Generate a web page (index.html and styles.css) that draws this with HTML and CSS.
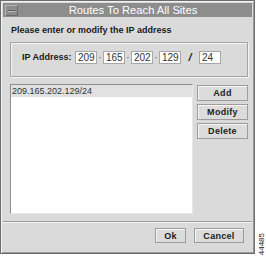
FILE: index.html
```html
<!DOCTYPE html>
<html>
<head>
<meta charset="utf-8">
<link rel="stylesheet" href="styles.css">
</head>
<body>
<div class="window">
  <div class="titlebar">
    <span class="menu-btn"><span class="menu-dash"></span></span>
    <span class="title">Routes To Reach All Sites</span>
  </div>
  <div class="content">
    <div class="prompt">Please enter or modify the IP address</div>
    <div class="ipbox">
      <span class="ip-label">IP Address:</span>
      <span class="field">209</span>
      <span class="dot">·</span>
      <span class="field">165</span>
      <span class="dot">·</span>
      <span class="field">202</span>
      <span class="dot">·</span>
      <span class="field">129</span>
      <span class="slash">/</span>
      <span class="field">24</span>
    </div>
    <div class="main">
      <div class="list">
        <div class="item selected">209.165.202.129/24</div>
      </div>
      <div class="side">
        <button class="btn side-btn">Add</button>
        <button class="btn side-btn">Modify</button>
        <button class="btn side-btn">Delete</button>
      </div>
    </div>
  </div>
  <div class="footer">
    <button class="btn ok-btn">Ok</button>
    <button class="btn cancel-btn">Cancel</button>
  </div>
</div>
<div class="figno">44485</div>
</body>
</html>
```

FILE: styles.css
```css
html, body {
  margin: 0;
  padding: 0;
  background: #ffffff;
}
body {
  width: 266px;
  height: 256px;
  display: flex;
  align-items: flex-end;
  font-family: "Liberation Sans", Arial, sans-serif;
  color: #1a1a1a;
}
.window {
  align-self: flex-start;
  width: 255px;
  height: 254px;
  box-sizing: border-box;
  border: 1px solid #6c6c6c;
  box-shadow: inset 1px 1px 0 #f2f2f2, inset -1px -1px 0 #9a9a9a;
  padding: 2px 2px 2px 2px;
  background: #dadada;
  display: flex;
  flex-direction: column;
}
.titlebar {
  height: 14px;
  background: #8d8d8d;
  display: flex;
  align-items: center;
}
.menu-btn {
  width: 11px;
  height: 9px;
  margin-left: 2px;
  border: 1px solid;
  border-color: #b4b4b4 #6a6a6a #6a6a6a #b4b4b4;
  display: flex;
  align-items: center;
  justify-content: center;
}
.menu-dash {
  width: 7px;
  height: 1px;
  background: #5a5a5a;
  box-shadow: 0 1px 0 #c0c0c0;
}
.title {
  flex: 1;
  text-align: center;
  color: #ffffff;
  font-size: 11.2px;
  line-height: 14px;
  margin-right: 4px;
}
.content {
  flex: 1;
  padding: 7px 4px 0 7px;
  display: flex;
  flex-direction: column;
}
.prompt {
  font-size: 9px;
  font-weight: bold;
  line-height: 12px;
  padding-left: 1px;
}
.ipbox {
  margin-top: 6px;
  height: 35px;
  box-sizing: border-box;
  border: 1px solid #a4a4a4;
  box-shadow: inset 1px 1px 0 #f4f4f4, 1px 1px 0 #f4f4f4;
  padding: 8px 0 0 11px;
  display: flex;
  align-items: flex-start;
}
.ip-label {
  font-size: 9px;
  font-weight: bold;
  line-height: 13px;
  width: 53px;
}
.field {
  width: 22px;
  height: 13px;
  box-sizing: border-box;
  background: #ffffff;
  border: 1px solid #a8a8a8;
  font-size: 10px;
  line-height: 11px;
  padding-left: 2px;
  color: #333;
}
.dot {
  width: 6px;
  text-align: center;
  font-size: 10px;
  line-height: 13px;
  color: #555;
}
.slash {
  width: 18px;
  text-align: center;
  font-size: 11px;
  font-weight: bold;
  font-style: italic;
  line-height: 13px;
}
.main {
  margin-top: 7px;
  display: flex;
  gap: 4px;
}
.list {
  width: 183px;
  height: 130px;
  box-sizing: border-box;
  background: #ffffff;
  border: 1px solid #8c8c8c;
  border-right-color: #e8e8e8;
  border-bottom-color: #e8e8e8;
}
.item {
  font-size: 9px;
  line-height: 12px;
  padding-left: 1px;
  color: #333;
}
.item.selected {
  background: #e1e1e1;
}
.side {
  width: 51px;
  padding-top: 1px;
  display: flex;
  flex-direction: column;
  gap: 3px;
}
.btn {
  font-family: "Liberation Sans", Arial, sans-serif;
  font-size: 9px;
  font-weight: bold;
  color: #222;
  background: #dcdcdc;
  border: 1px solid #9c9c9c;
  box-shadow: inset 1px 1px 0 #f6f6f6;
  padding: 0;
  margin: 0;
  letter-spacing: 0.3px;
}
.side-btn {
  height: 16px;
  width: 51px;
}
.footer {
  margin-top: 7px;
  border-top: 1px solid #9a9a9a;
  box-shadow: inset 0 1px 0 #f4f4f4;
  height: 30px;
  box-sizing: border-box;
  padding: 6px 8px 0 0;
  display: flex;
  justify-content: flex-end;
  align-items: flex-start;
  gap: 8px;
}
.ok-btn {
  width: 31px;
  height: 15px;
}
.cancel-btn {
  width: 50px;
  height: 15px;
}
.figno {
  writing-mode: vertical-rl;
  transform: rotate(180deg);
  font-size: 8px;
  line-height: 8px;
  margin-left: 3px;
  margin-bottom: 1px;
  color: #222;
}
```
